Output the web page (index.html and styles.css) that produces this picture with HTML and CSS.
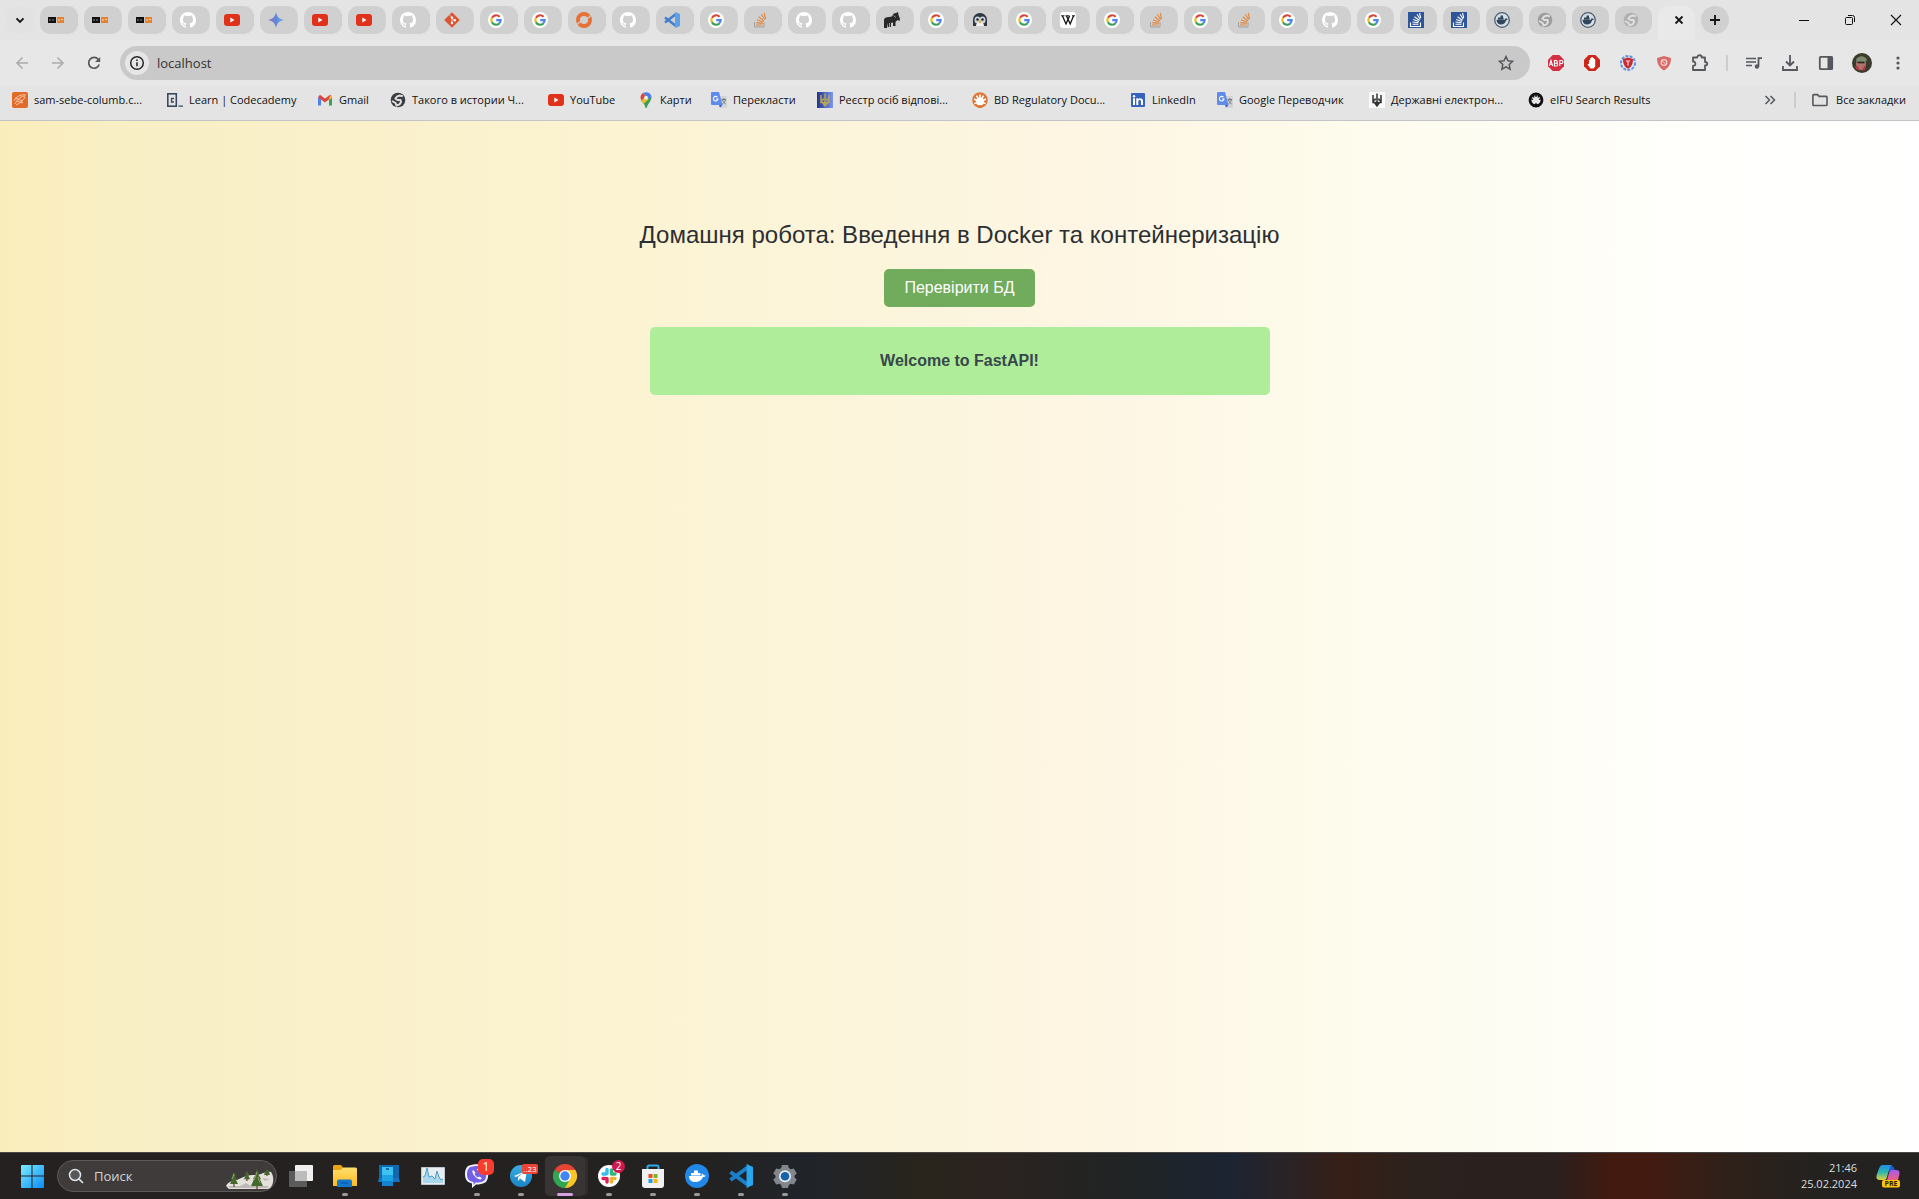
FILE: index.html
```html
<!DOCTYPE html>
<html lang="uk">
<head>
<meta charset="utf-8">
<meta name="viewport" content="width=device-width, initial-scale=1">
<title>localhost</title>
<link rel="stylesheet" href="styles.css">
</head>
<body>
<svg class="sprite" aria-hidden="true">
  <defs>
    <linearGradient id="gem" x1="0" y1="0" x2="1" y2="0"><stop offset="0" stop-color="#a06fc0"/><stop offset=".5" stop-color="#5f86d8"/><stop offset="1" stop-color="#6fb0f0"/></linearGradient>
    <linearGradient id="win" x1="0" y1="0" x2="1" y2="1"><stop offset="0" stop-color="#7cecff"/><stop offset="1" stop-color="#0a8cf8"/></linearGradient>
    <linearGradient id="fold" x1="0" y1="0" x2="0" y2="1"><stop offset="0" stop-color="#ffdf70"/><stop offset="1" stop-color="#ffb91f"/></linearGradient>
    <linearGradient id="tg" x1="0" y1="0" x2="0" y2="1"><stop offset="0" stop-color="#35afe6"/><stop offset="1" stop-color="#1b84c4"/></linearGradient>
    <linearGradient id="reg" x1="0" y1="0" x2="1" y2="0"><stop offset="0" stop-color="#1f348f"/><stop offset="1" stop-color="#7d98ee"/></linearGradient>
    <linearGradient id="cop" x1="0" y1="0" x2="0" y2="1"><stop offset="0" stop-color="#1e8ee8"/><stop offset=".5" stop-color="#2fb8a8"/><stop offset="1" stop-color="#e8d23c"/></linearGradient>
    <linearGradient id="cop2" x1="0" y1="0" x2="0" y2="1"><stop offset="0" stop-color="#a45cf0"/><stop offset="1" stop-color="#f0607c"/></linearGradient>
  </defs>
  <symbol id="danit" viewBox="0 0 16 16"><path fill="#111" d="M0 5h8v6H0z"/><path fill="#e5822e" d="M9 5h7v6H9z"/><path stroke="#888" d="M2 7v2M4 8h2" /><path stroke="#f8d8b8" d="M11 7v2M13 7.500h2"/></symbol>
  <symbol id="github" viewBox="0 0 16 16"><path fill="#fff" d="M8 0C3.580 0 0 3.580 0 8c0 3.540 2.290 6.530 5.470 7.590.4.070.55-.17.55-.38 0-.19-.01-.82-.01-1.490-2.010.37-2.530-.49-2.690-.94-.09-.23-.48-.94-.82-1.130-.28-.15-.68-.52-.01-.53.63-.01 1.080.58 1.230.82.72 1.210 1.870.87 2.330.66.07-.52.28-.87.51-1.070-1.780-.2-3.640-.89-3.640-3.950 0-.87.31-1.590.82-2.150-.08-.2-.36-1.020.08-2.120 0 0 .67-.21 2.200.82A7.500 7.500 0 0 1 8 3.860c.68 0 1.360.09 2 .27 1.530-1.040 2.200-.82 2.200-.82.44 1.100.16 1.920.08 2.120.51.56.82 1.270.82 2.150 0 3.070-1.870 3.750-3.650 3.950.29.25.54.73.54 1.480 0 1.070-.01 1.930-.01 2.200 0 .21.15.46.55.38A8 8 0 0 0 16 8c0-4.420-3.580-8-8-8z"/></symbol>
  <symbol id="youtube" viewBox="0 0 16 16"><rect y="2" width="16" height="12" rx="3" fill="#e0311a"/><path fill="#fff" d="M6.300 5.500v5l4.200-2.500z"/></symbol>
  <symbol id="gemini" viewBox="0 0 16 16"><path fill="url(#gem)" d="M8 0c.8 4.700 3.300 7.200 8 8-4.700.8-7.200 3.300-8 8-.8-4.700-3.300-7.200-8-8 4.700-.8 7.200-3.300 8-8z"/></symbol>
  <symbol id="git" viewBox="0 0 16 16"><path fill="#dd5431" d="M8 .2 15.800 8 8 15.800.2 8z"/><path d="M5.800 3.200 8 5.400V11M8 6l2.600 2.500" stroke="#f3d8cc" fill="none"/><circle cx="8" cy="5.600" r="1.200" fill="#fff"/><circle cx="8" cy="11" r="1.200" fill="#fff"/><circle cx="10.800" cy="8.300" r="1.200" fill="#fff"/></symbol>
  <symbol id="google" viewBox="0 0 16 16"><circle cx="8" cy="8" r="8" fill="#fff"/><g fill="none" stroke-width="2.200"><path stroke="#d8453a" d="M4 5.700A4.700 4.700 0 0 1 11.600 4.800"/><path stroke="#f0b823" d="M4 5.600a4.800 4.800 0 0 0 0 4.800"/><path stroke="#3b9f57" d="M3.900 10.300a4.700 4.700 0 0 0 7.200 1.300"/><path stroke="#5184ec" d="M11 11.700A4.700 4.700 0 0 0 12.700 8.100H8.200"/></g></symbol>
  <symbol id="railway" viewBox="0 0 16 16"><circle cx="8" cy="8" r="6" fill="none" stroke="#e57137" stroke-width="4"/><path d="M1 12.500 5 9M11 7l4-3.500" stroke="#d0d0d0" stroke-width="1.200"/></symbol>
  <symbol id="vscode" viewBox="0 0 16 16"><path d="M1 5.500 12 14M1 10.500 12 2" stroke="#3f7fd0" stroke-width="2.600"/><path fill="#5ba0e8" d="m11 0 5 2v12l-5 2z"/></symbol>
  <symbol id="so" viewBox="0 0 16 16"><path fill="none" stroke="#a0a0a0" d="M2.500 10v5h9.500v-5"/><path stroke="#e28438" stroke-width="1.100" d="M4 13h6.500M4.200 10.600l6.500.8M5 7.800l6.200 2.300M6.700 4.800l5.200 4M9.200 2.200l3.600 5.300M12.200.800 13.500 7"/></symbol>
  <symbol id="sob" viewBox="0 0 16 16"><path fill="#2d5597" d="M0 0h16v16H0z"/><path fill="none" stroke="#fff" stroke-width="1.100" d="M2.500 10.500v4h10v-4M4.500 12.300h6M4.500 10l6 .8M5.200 7.500l5.600 2M6.500 4.800l5 3.700M9 2.200l3.200 5M11.500 1l1.200 5"/></symbol>
  <symbol id="elephant" viewBox="0 0 16 16"><path fill="#292929" d="M0 8c0-2 2-3 5-3l3-.5C9 2 10 1 12 1l2-1 .5 3 1.500 4-.5 2-2-1-1 1-1 1v4H9v-3.500l-2 .5v4H4v-4l-1 5H0z"/><path stroke="#d0d0d0" stroke-width=".7" d="m10 3.500 1.500 2M5.500 11v4"/></symbol>
  <symbol id="penguin" viewBox="0 0 16 16"><path fill="#303941" d="M8 1c5 0 7 4 7 7v6H1V8c0-3 2-7 7-7z"/><ellipse cx="5.500" cy="8" rx="3" ry="3.500" fill="#c9d6dc"/><ellipse cx="10.500" cy="8" rx="3" ry="3.500" fill="#c9d6dc"/><path fill="#f2f2f2" d="M4 14c0-3 2-4 4-4s4 1 4 4z"/><circle cx="5.500" cy="7.500" r="1.200" fill="#223"/><circle cx="10.500" cy="7.500" r="1.200" fill="#223"/><path fill="#e5ad43" d="m6.300 9 1.700-1.300L9.700 9 8 12z"/></symbol>
  <symbol id="wiki" viewBox="0 0 16 16"><rect width="16" height="16" rx="3" fill="#fff"/><path fill="none" stroke="#111" stroke-width="1.300" d="M2.500 4 6 12l3.500-8M6.500 4l3.700 8L13.500 4"/><path stroke="#111" d="M1 3.800h3.500M5.500 3.800h4M12 3.800h3"/></symbol>
  <symbol id="dockerc" viewBox="0 0 16 16"><circle cx="8" cy="8" r="7.300" fill="#d8dee3" stroke="#4b5f75" stroke-width="1.300"/><path fill="#2f465c" d="M2.500 7.800h8.300l1-1.800 1 .8 1.400.3-2.200 1.500c-.7 2.600-2.300 4-5 4-2.700 0-4.400-1.700-4.500-4.800zM4 5.500h5.500v2H4zM6.500 3.500H9v2H6.500z"/></symbol>
  <symbol id="globe" viewBox="0 0 16 16"><circle cx="8" cy="8" r="7.300" fill="currentColor"/><path fill="none" stroke="#dedede" stroke-width="2" d="M12.800 4.200 9.500 3.500 7 4.500 5.500 6.500l2 1.500h3l.5 2-1.500 2.500-3 1-1-2.500L2 9"/></symbol>
  <symbol id="x" viewBox="0 0 16 16"><path d="m4.500 4.500 7 7m0-7-7 7" stroke="#161616" stroke-width="1.800"/></symbol>
  <symbol id="plus" viewBox="0 0 16 16"><path d="M8 3v10M3 8h10" stroke="#161616" stroke-width="1.900"/></symbol>
  <symbol id="chev" viewBox="0 0 16 16"><path d="M4.500 6.300 8 9.800l3.500-3.500" fill="none" stroke="#161616" stroke-width="1.900"/></symbol>
  <symbol id="min" viewBox="0 0 16 16"><path d="M3 8.500h10" stroke="#111"/></symbol>
  <symbol id="max" viewBox="0 0 16 16"><g fill="none" stroke="#111"><rect x="3.500" y="5.500" width="7" height="7" rx="1"/><path d="M6 3.500h4.500a2 2 0 0 1 2 2V10"/></g></symbol>
  <symbol id="close" viewBox="0 0 16 16"><path d="m3 3 10 10M13 3 3 13" stroke="#111" stroke-width="1.100"/></symbol>
  <symbol id="back" viewBox="0 0 16 16"><path d="M14 8H3M8.500 2.500 3 8l5.500 5.500" fill="none" stroke="#aaacae" stroke-width="1.600"/></symbol>
  <symbol id="fwd" viewBox="0 0 16 16"><path d="M2 8h11M7.500 2.500 13 8l-5.500 5.500" fill="none" stroke="#aaacae" stroke-width="1.600"/></symbol>
  <symbol id="reload" viewBox="0 0 16 16"><path d="M13.200 9.500A5.400 5.400 0 1 1 12.300 4.500" fill="none" stroke="#55585c" stroke-width="1.700"/><path fill="#55585c" d="M14.200 2v5H9z"/></symbol>
  <symbol id="info" viewBox="0 0 16 16"><circle cx="8" cy="8" r="6.300" fill="none" stroke="#26282b" stroke-width="1.500"/><path d="M8 7.200v4M8 4.400v1.600" stroke="#26282b" stroke-width="1.600"/></symbol>
  <symbol id="star" viewBox="0 0 16 16"><path d="m8 1.500 2 4.300 4.600.5-3.400 3.200.9 4.700L8 11.800l-4.100 2.400.9-4.700L1.400 6.300 6 5.800z" fill="none" stroke="#55585c" stroke-width="1.500"/></symbol>
  <symbol id="abp" viewBox="0 0 16 16"><path fill="#d33043" d="M4.700 0h6.600L16 4.700v6.600L11.300 16H4.700L0 11.300V4.700z"/><path fill="none" stroke="#fff" stroke-width="1.100" d="M1.300 11 3 5.500 4.700 11M2 9.200h2M6.500 5.500V11h1.800a1.300 1.300 0 0 0 0-2.800H6.500h1.500a1.200 1.200 0 0 0 0-2.700zM11.800 11V5.500h1.700a1.500 1.500 0 0 1 0 3h-1.700"/></symbol>
  <symbol id="ublock" viewBox="0 0 16 16"><path fill="#cc2718" d="M4.700 0h6.600L16 4.700v6.600L11.300 16H4.700L0 11.300V4.700z"/><path fill="#fff" d="M5 5h1.200V3h1.200V2h1.400v1H10v1h1.200v7.500L9.500 13.500h-3L3.500 9.500l1-.8.500.5z"/></symbol>
  <symbol id="tshield" viewBox="0 0 16 16"><circle cx="8" cy="8" r="7" fill="none" stroke="#5b94e4" stroke-width="2" stroke-dasharray="3 1.300"/><path fill="#c42c32" d="M8 2.500 13 4c0 5-1.500 8-5 9.800C4.500 12 3 9 3 4z"/><path stroke="#fbd5d0" stroke-width="1.200" d="M5.800 6h4.400M8 6v4.500"/></symbol>
  <symbol id="shield2" viewBox="0 0 16 16"><path fill="#d96a68" d="M8 1 15 3c0 6-2.500 10-7 12.500C3.500 13 1 9 1 3z"/><circle cx="8" cy="7.500" r="2.800" fill="none" stroke="#f5d6d4" stroke-width="1.200"/><path stroke="#f5d6d4" d="m6 5.500 4 4"/></symbol>
  <symbol id="puzzle" viewBox="0 0 18 18"><path d="M2 3.500h4.200c0-3 4.600-3 4.600 0H14V8c3 0 3 3.500 0 3.500V16H2v-4.200c3.200 0 3.200-4.300 0-4.300z" fill="none" stroke="#55585c" stroke-width="1.800" stroke-linejoin="round"/></symbol>
  <symbol id="music" viewBox="0 0 16 16"><path d="M0 3.500h10M0 7h10M0 10.500h6" stroke="#55585c" stroke-width="1.600"/><path d="M12.500 11V3.200H16" fill="none" stroke="#55585c" stroke-width="1.800"/><circle cx="11" cy="11.500" r="2.200" fill="#55585c"/></symbol>
  <symbol id="down" viewBox="0 0 16 16"><path d="M8 0v10M4 6.500l4 4 4-4M1 11v4h14v-4" fill="none" stroke="#55585c" stroke-width="1.800"/></symbol>
  <symbol id="panel" viewBox="0 0 16 16"><rect x="1.800" y="1.800" width="12.400" height="12.400" rx="1" fill="none" stroke="#55585c" stroke-width="1.800"/><path fill="#55585c" d="M9.500 1.500h5v13h-5z"/></symbol>
  <symbol id="avatar" viewBox="0 0 20 20"><circle cx="10" cy="10" r="10" fill="#3c3a2b"/><ellipse cx="9" cy="11" rx="5" ry="6" fill="#b0756a"/><path fill="#7c8b70" d="M4 7c2-5 9-5 11 0l-2 2H5z"/><path fill="#b53a48" d="M3 13h3l2 5-4-2zM12 13l2 0-1 4-3 1z"/><path stroke="#27221c" stroke-width="1.600" d="M5.500 9.500h7"/></symbol>
  <symbol id="dots" viewBox="0 0 16 16"><g fill="#55585c"><circle cx="8" cy="3" r="1.600"/><circle cx="8" cy="8" r="1.600"/><circle cx="8" cy="13" r="1.600"/></g></symbol>
  <symbol id="columb" viewBox="0 0 16 16"><rect width="16" height="16" rx="2" fill="#e36a27"/><path d="M2 9c2-5 8-7 12-6M3 12c3-6 7-8 10-8M4 13c4-2 7-4 9-8M3 6l8 3M5 9l6 2" fill="none" stroke="#f6d3bd" stroke-width=".9"/></symbol>
  <symbol id="codec" viewBox="0 0 16 16"><rect x=".8" y="1.800" width="8.500" height="12.400" fill="none" stroke="#3a4a63" stroke-width="1.600"/><path d="M7 6.500H4.500v3.500H7M11.500 14.200H16" fill="none" stroke="#3a4a63" stroke-width="1.300"/></symbol>
  <symbol id="gmail" viewBox="0 0 16 16"><path fill="#4c82ea" d="M1 5v8.500h3V7z"/><path fill="#36a557" d="M12 7v6.500h3V5z"/><path fill="none" stroke="#dc4639" stroke-width="3" d="m2 4 6 4.500L14 4"/><path fill="#f0b929" d="m12 5 3-2v3l-3 2z"/></symbol>
  <symbol id="maps" viewBox="0 0 16 16"><path fill="#35a052" d="M3 8c1 2.500 4 4 4.500 8h1.200C9.500 12 13.500 9 13.500 5z"/><path fill="#ecbd35" d="M3 8 8 4l3 3-5.500 5z"/><path fill="#d8483a" d="M2.500 6C2.500 3.500 3.500 2 5 1l3 3-4.500 4.500z"/><path fill="#4b80e5" d="M5 1c3.500-2 8-.5 8.600 4l-3.600 2-2-3z"/><circle cx="8" cy="5.700" r="1.900" fill="#eee"/></symbol>
  <symbol id="gtr" viewBox="0 0 16 16"><path fill="#d2d4d8" d="M6 4h9a1 1 0 0 1 1 1v11h-6z"/><path fill="#5f8bec" d="M1 0h7l3.500 13H1a1 1 0 0 1-1-1V1a1 1 0 0 1 1-1z"/><path fill="#3d61c0" d="M8 13h3.500L9 15.800z"/><path d="M6.500 5.200A2.300 2.300 0 1 0 7 7H5" fill="none" stroke="#fff" stroke-width="1.100"/><path d="M10.500 7.500H15M12.800 6v1.500M11.500 8c.5 2 2 3 3.200 4M14.300 8c-.5 2-2 3.500-3 4" fill="none" stroke="#747a80"/></symbol>
  <symbol id="tryzub" viewBox="0 0 16 16"><path fill="none" stroke="currentColor" stroke-width="1.500" d="M8 1.500V15M4 3v7.500h8V3M4 10c0-2 2-1 2.500-3.500M12 10c0-2-2-1-2.500-3.500M5.500 10.500 8 14l2.500-3.500"/></symbol>
  <symbol id="register" viewBox="0 0 16 16"><path fill="url(#reg)" d="M0 0h16v16H0z"/><use href="#tryzub" color="#b8a552"/></symbol>
  <symbol id="state" viewBox="0 0 16 16"><path fill="#fafafa" d="M0 0h16v16H0z"/><use href="#tryzub" color="#333"/></symbol>
  <symbol id="bd" viewBox="0 0 16 16"><circle cx="8" cy="8" r="7.800" fill="#dd7735"/><path stroke="#fff" stroke-width="1.600" d="M8 10V2.500M8 10 4.500 3.700M8 10l3.500-6.300M8 10 2 7M8 10l6-3M8 10 2.500 11.500M8 10l5.500 1.500"/><circle cx="8" cy="9.500" r="4" fill="#fff"/><path fill="#dd7735" d="M6 16c0-4 4-4 4 0z"/></symbol>
  <symbol id="eifu" viewBox="0 0 16 16"><circle cx="8" cy="8" r="6" fill="#e6e6e6" stroke="#111" stroke-width="2.800"/><path stroke="#111" stroke-width="1.300" d="M8 1v4M4.500 2l1.500 3.500M11.500 2 10 5.500M2 6l3 1.500M14 6l-3 1.500"/><path fill="#111" d="M5.800 15c0-5 4.400-5 4.400 0z"/></symbol>
  <symbol id="linkedin" viewBox="0 0 16 16"><rect x="1" y="1" width="14" height="14" rx="1" fill="#3563bd"/><path fill="#fff" d="M3 6.300h2V13H3zM6.300 6.300h1.900v1c1-1.700 4.800-1.800 4.800 1.700v4h-2V9.500c0-2-2.700-2-2.700 0V13h-2z"/><circle cx="4" cy="4.200" r="1.200" fill="#fff"/></symbol>
  <symbol id="more" viewBox="0 0 16 16"><path d="m3.500 4 4 4-4 4M8.500 4l4 4-4 4" fill="none" stroke="#55585c" stroke-width="1.500"/></symbol>
  <symbol id="folder" viewBox="0 0 16 16"><path d="M.9 12.500V3.400a.8.800 0 0 1 .8-.8h3.800L7.200 4.400h7a.8.800 0 0 1 .8.800v7.500a.8.800 0 0 1-.8.800H1.800a.9.900 0 0 1-.9-1z" fill="none" stroke="#55585c" stroke-width="1.600"/></symbol>
  <symbol id="start" viewBox="0 0 24 24"><path fill="url(#win)" d="M1 2a1 1 0 0 1 1-1h9.500v10.500H1zM12.500 1H23a1 1 0 0 1 1 1v9.500H12.500zM1 12.500h10.500V24H2a1 1 0 0 1-1-1zM12.500 12.500H24V23a1 1 0 0 1-1 1H12.500z"/></symbol>
  <symbol id="search" viewBox="0 0 16 16"><circle cx="7" cy="7" r="5.500" fill="#56585a" stroke="#dfe5ea" stroke-width="1.500"/><path d="m11 11 4 4" stroke="#dfe5ea" stroke-width="1.700"/></symbol>
  <symbol id="snow" viewBox="0 0 50 22"><path fill="#e4e1dc" d="M1 18C4 12 10 13 14 11c5-2 8-4 16-4 7 0 10-4 16-3 3 4 3 11 0 15-1 1-2 2-4 2H4z"/><path fill="#bdb9b9" d="M3 18h12l6-3 5 3h18l-2 2H5zM18 11h8l-4 2zM37 10l8 1-5 2z"/><path stroke="#6d4428" stroke-width="1.200" d="M9 15v4M32 17v4M22 10v3M42 6v2"/><g fill="#45692c"><path d="m9 4 2 4-1 0 2 4-1 0 2 4H5l2-4H6l2-4H7zM22 3l2 4-1 0 2 4h-6l2-4h-1zM32 1l2 5-1 0 3 5-1 0 2 5 1 2H26l3-7-1 0 3-5-1 0zM42 1l2 3 1 3h-6l1-3z"/></g><path stroke="#a2b478" stroke-width=".8" d="m9 6-2 5M32 4l-3 8M33 9l2 6"/></symbol>
  <symbol id="taskview" viewBox="0 0 24 24"><rect x="6" y="1" width="18" height="16" rx="1" fill="#f0f0f0"/><path fill="#5b5b5b" d="M0 7h6v10h12v6H1a1 1 0 0 1-1-1z"/><path fill="#bcbcbc" d="M6 7h12v10H6z"/></symbol>
  <symbol id="explorer" viewBox="0 0 24 24"><path fill="#e8a413" d="M0 2.500A1.500 1.500 0 0 1 1.500 1H8l2 2.500V8H0z"/><path fill="url(#fold)" d="M0 6h8l2-2.500h12.500A1.500 1.500 0 0 1 24 5v17H0z"/><path fill="#1278cc" d="M4 23v-5.500A2 2 0 0 1 6 15.500h11a2 2 0 0 1 2 2V23z"/><path stroke="#0c5dab" stroke-width="1.500" d="M8 19h7"/></symbol>
  <symbol id="phone" viewBox="0 0 24 24"><path fill="#1268ac" d="M2 1h20v14H2z"/><path fill="#1673bd" d="M2 14h20l1 4H1z"/><rect x="5" y="3" width="11" height="19" fill="#1ba3e5"/><path fill="#3cc3f4" d="M5 3h11v8H5z"/><path d="M9 5h3" stroke="#0a4f8c" stroke-width="1.500"/><path fill="#1583cf" d="M5 17h11v5H5z"/></symbol>
  <symbol id="monitor" viewBox="0 0 24 24"><path fill="#e7edf0" stroke="#c0c7cc" d="M.5 3.500h23v17H.5z"/><path fill="#a9d8ee" d="M2 19v-6l2-1 2-8 2 9 3-1 3 3 2-8 2 6 2 3 2-1v4z"/><path fill="none" stroke="#4d9ec5" d="m2 13 2-1 2-8 2 9 3-1 3 3 2-8 2 6 2 3 2-1"/></symbol>
  <symbol id="viber" viewBox="0 0 24 24"><path fill="#f4f1ff" d="M3 2c5-2.500 13-2.500 18 0 3 4 3 12 0 16-3 2-7 2.500-10 2.500L7 24v-4.500C1 18 0 14 0 10 0 6 1 4 3 2z"/><path fill="#7360e8" d="M4.500 3.500c4-2 11-2 15 0 2.500 3 2.500 10 0 13-3 2-6 2-9 2L8.500 21v-3C3 17 2 14 2 10c0-3 1-5 2.500-6.500z"/><path d="M8 6c-2 1 1 8 7 9.500 1.500 0 2-1.500 1-2l-2-1-1 1c-2-1-3-2-3.500-4l1-1z" fill="#fff"/><path d="M12 5.500c4 0 5 2 5 5" fill="none" stroke="#fff" stroke-width="1.200"/></symbol>
  <symbol id="telegram" viewBox="0 0 24 24"><circle cx="12" cy="12" r="11" fill="url(#tg)"/><path fill="#fff" d="M5 12 18 6.500 16 18l-5-3.500L9 17v-4l6-4.500-8 4.500z"/></symbol>
  <symbol id="chrome" viewBox="0 0 24 24"><path fill="#e64536" d="M12 12 1.600 6A12 12 0 0 1 22.400 6z"/><path fill="#f9c626" d="M12 12V6h10.400A12 12 0 0 1 12 24z"/><path fill="#32a752" d="m12 12 4 5-4 7A12 12 0 0 1 1.600 6z"/><circle cx="12" cy="12" r="6" fill="#fff"/><circle cx="12" cy="12" r="4.700" fill="#4285f4"/></symbol>
  <symbol id="slack" viewBox="0 0 24 24"><circle cx="12" cy="12" r="11" fill="#fff"/><g stroke-width="3.400" stroke-linecap="round"><path stroke="#36bfee" d="M10 5.500v4M6 10h3"/><path stroke="#2fb67d" d="M14.500 6v4M15 10h3"/><path stroke="#dd1f5c" d="M10 14.500v3.500M6 14.500h2"/><path stroke="#edb22f" d="M14.500 14.500v3.500M15 14.500h3"/></g></symbol>
  <symbol id="store" viewBox="0 0 24 24"><path d="M6.500 6V3a1.500 1.500 0 0 1 1.500-1.500h8A1.500 1.500 0 0 1 17.500 3v3" fill="none" stroke="#2cabe8" stroke-width="2"/><path fill="#f0f1f2" d="M1 5h22v16a3 3 0 0 1-3 3H4a3 3 0 0 1-3-3z"/><path fill="#ef4a25" d="M7.500 10h4v4h-4z"/><path fill="#7bb720" d="M12.500 10h4v4h-4z"/><path fill="#1e9fe8" d="M7.500 15h4v4h-4z"/><path fill="#fbb800" d="M12.500 15h4v4h-4z"/></symbol>
  <symbol id="docker" viewBox="0 0 24 24"><circle cx="12" cy="12" r="12" fill="#2188e8"/><path fill="#fff" d="M4 12h12.500c.2-1.200 0-2 .5-2.500 1 .5 1.500 1 1.700 1.800l2 .2c-.5 1.200-1.500 1.500-2.700 1.500-1.500 3.500-4 5-7.500 5-4 0-6.500-2-6.500-6zM6 9h9.500v2.500H6zM9 6.500h4V9H9z"/></symbol>
  <symbol id="vsblue" viewBox="0 0 24 24"><path d="m1.500 8 17 12.500M1.500 16 18.500 3.500" stroke="#1a80c9" stroke-width="4"/><path fill="#2aa6ef" d="m17.500 0 6.500 3v18l-6.500 3z"/></symbol>
  <symbol id="gear" viewBox="0 0 24 24"><path fill="#81878d" d="m9 1 6 0 .8 3 2 1.200 3-.8 3 5-2.300 2.200v1.800l2.300 2.200-3 5-3-.8-2 1.200L15 24H9l-.8-3-2-1.200-3 .8-3-5 2.300-2.200v-1.800L.2 9.400l3-5 3 .8 2-1.200z"/><circle cx="12" cy="12.300" r="6" fill="#e9eef2"/><circle cx="12" cy="12.300" r="4.300" fill="#1762a8"/></symbol>
  <symbol id="copilot" viewBox="0 0 24 24"><path fill="#2355d8" d="M12 1c5 0 6 2 7 6h-6z"/><path fill="url(#cop)" d="M7 1h9c-2 1-2.500 3-3 5l-2 7c-.6 2-1 3-3 3H4c-4 0-4-3-3-6l2-5.500C4 2 5 1 7 1z"/><path fill="url(#cop2)" d="M16 6h4c4 0 4 3 3 6l-1 4H11l2-7c.6-2 1-3 3-3z"/><rect x="6" y="16" width="18" height="7.500" rx="2" fill="#ffc40c"/></symbol>
</svg>

<header class="browser">
  <div class="tabstrip">
    <button class="tabsearch" aria-label="Поиск вкладок"><svg><use href="#chev"/></svg></button>
    <nav class="tabs" aria-label="Вкладки">
      <button class="tab"><svg><use href="#danit"/></svg></button>
      <button class="tab"><svg><use href="#danit"/></svg></button>
      <button class="tab"><svg><use href="#danit"/></svg></button>
      <button class="tab"><svg><use href="#github"/></svg></button>
      <button class="tab"><svg><use href="#youtube"/></svg></button>
      <button class="tab"><svg><use href="#gemini"/></svg></button>
      <button class="tab"><svg><use href="#youtube"/></svg></button>
      <button class="tab"><svg><use href="#youtube"/></svg></button>
      <button class="tab"><svg><use href="#github"/></svg></button>
      <button class="tab"><svg><use href="#git"/></svg></button>
      <button class="tab"><svg><use href="#google"/></svg></button>
      <button class="tab"><svg><use href="#google"/></svg></button>
      <button class="tab"><svg><use href="#railway"/></svg></button>
      <button class="tab"><svg><use href="#github"/></svg></button>
      <button class="tab"><svg><use href="#vscode"/></svg></button>
      <button class="tab"><svg><use href="#google"/></svg></button>
      <button class="tab"><svg><use href="#so"/></svg></button>
      <button class="tab"><svg><use href="#github"/></svg></button>
      <button class="tab"><svg><use href="#github"/></svg></button>
      <button class="tab"><svg><use href="#elephant"/></svg></button>
      <button class="tab"><svg><use href="#google"/></svg></button>
      <button class="tab"><svg><use href="#penguin"/></svg></button>
      <button class="tab"><svg><use href="#google"/></svg></button>
      <button class="tab"><svg><use href="#wiki"/></svg></button>
      <button class="tab"><svg><use href="#google"/></svg></button>
      <button class="tab"><svg><use href="#so"/></svg></button>
      <button class="tab"><svg><use href="#google"/></svg></button>
      <button class="tab narrow"><svg><use href="#so"/></svg></button>
      <button class="tab narrow"><svg><use href="#google"/></svg></button>
      <button class="tab narrow"><svg><use href="#github"/></svg></button>
      <button class="tab narrow"><svg><use href="#google"/></svg></button>
      <button class="tab narrow"><svg><use href="#sob"/></svg></button>
      <button class="tab narrow"><svg><use href="#sob"/></svg></button>
      <button class="tab narrow"><svg><use href="#dockerc"/></svg></button>
      <button class="tab narrow globe"><svg><use href="#globe"/></svg></button>
      <button class="tab narrow"><svg><use href="#dockerc"/></svg></button>
      <button class="tab narrow globe pale"><svg><use href="#globe"/></svg></button>
      <button class="tab narrow active" aria-label="localhost"><svg><use href="#x"/></svg></button>
    </nav>
    <button class="newtab" aria-label="Новая вкладка"><svg><use href="#plus"/></svg></button>
    <div class="winctl">
      <button aria-label="Свернуть"><svg><use href="#min"/></svg></button>
      <button aria-label="Развернуть"><svg><use href="#max"/></svg></button>
      <button aria-label="Закрыть"><svg><use href="#close"/></svg></button>
    </div>
  </div>

  <div class="toolbar">
    <div class="navctl">
      <button aria-label="Назад"><svg><use href="#back"/></svg></button>
      <button aria-label="Вперёд"><svg><use href="#fwd"/></svg></button>
      <button aria-label="Обновить"><svg><use href="#reload"/></svg></button>
    </div>
    <div class="omnibox">
      <button class="siteinfo" aria-label="Сведения о сайте"><svg><use href="#info"/></svg></button>
      <input type="text" value="localhost" aria-label="Адрес">
      <button class="bare" aria-label="Добавить в закладки"><svg><use href="#star"/></svg></button>
    </div>
    <div class="exts">
      <button aria-label="ABP"><svg><use href="#abp"/></svg></button>
      <button aria-label="AdBlock"><svg><use href="#ublock"/></svg></button>
      <button aria-label="VPN"><svg><use href="#tshield"/></svg></button>
      <button aria-label="Щит"><svg><use href="#shield2"/></svg></button>
      <button aria-label="Расширения"><svg class="i18"><use href="#puzzle"/></svg></button>
      <span class="rule"></span>
      <button aria-label="Медиа"><svg><use href="#music"/></svg></button>
      <button aria-label="Загрузки"><svg><use href="#down"/></svg></button>
      <button aria-label="Боковая панель"><svg><use href="#panel"/></svg></button>
      <button aria-label="Профиль"><svg class="i20"><use href="#avatar"/></svg></button>
      <button aria-label="Меню"><svg><use href="#dots"/></svg></button>
    </div>
  </div>

  <div class="bookmarks">
    <nav class="marks" aria-label="Закладки">
      <a href="#"><svg><use href="#columb"/></svg>sam-sebe-columb.c...</a>
      <a href="#"><svg><use href="#codec"/></svg>Learn | Codecademy</a>
      <a href="#"><svg><use href="#gmail"/></svg>Gmail</a>
      <a href="#" class="dark"><svg><use href="#globe"/></svg>Такого в истории Ч...</a>
      <a href="#"><svg><use href="#youtube"/></svg>YouTube</a>
      <a href="#"><svg><use href="#maps"/></svg>Карти</a>
      <a href="#"><svg><use href="#gtr"/></svg>Перекласти</a>
      <a href="#"><svg><use href="#register"/></svg>Реєстр осіб відпові...</a>
      <a href="#"><svg><use href="#bd"/></svg>BD Regulatory Docu...</a>
      <a href="#"><svg><use href="#linkedin"/></svg>LinkedIn</a>
      <a href="#"><svg><use href="#gtr"/></svg>Google Переводчик</a>
      <a href="#"><svg><use href="#state"/></svg>Державні електрон...</a>
      <a href="#"><svg><use href="#eifu"/></svg>eIFU Search Results</a>
    </nav>
    <div class="allmarks">
      <button class="bare" aria-label="Ещё закладки"><svg><use href="#more"/></svg></button>
      <span class="rule"></span>
      <a href="#"><svg><use href="#folder"/></svg>Все закладки</a>
    </div>
  </div>
</header>

<main class="page">
  <h1>Домашня робота: Введення в Docker та контейнеризацію</h1>
  <button class="check">Перевірити БД</button>
  <p class="result">Welcome to FastAPI!</p>
</main>

<footer class="taskbar">
  <button class="app" aria-label="Пуск"><svg><use href="#start"/></svg></button>
  <label class="find">
    <svg class="lens"><use href="#search"/></svg>
    <input type="text" placeholder="Поиск" aria-label="Поиск">
    <svg class="scene"><use href="#snow"/></svg>
  </label>
  <div class="apps">
    <button class="app" aria-label="Представление задач"><svg><use href="#taskview"/></svg></button>
    <button class="app open" aria-label="Проводник"><svg><use href="#explorer"/></svg></button>
    <button class="app" aria-label="Телефон"><svg><use href="#phone"/></svg></button>
    <button class="app" aria-label="Монитор"><svg><use href="#monitor"/></svg></button>
    <button class="app open" aria-label="Viber"><svg><use href="#viber"/></svg><span class="badge big">1</span></button>
    <button class="app open" aria-label="Telegram"><svg><use href="#telegram"/></svg><span class="badge tg">..23</span></button>
    <button class="app open current" aria-label="Chrome"><svg><use href="#chrome"/></svg></button>
    <button class="app open" aria-label="Slack"><svg><use href="#slack"/></svg><span class="badge slack">2</span></button>
    <button class="app open" aria-label="Store"><svg><use href="#store"/></svg></button>
    <button class="app open" aria-label="Docker"><svg><use href="#docker"/></svg></button>
    <button class="app open" aria-label="VS Code"><svg><use href="#vsblue"/></svg></button>
    <button class="app open" aria-label="Параметры"><svg><use href="#gear"/></svg></button>
  </div>
  <div class="clock"><time>21:46</time><time>25.02.2024</time></div>
  <button class="app copilot" aria-label="Copilot"><svg><use href="#copilot"/></svg><span class="pre">PRE</span></button>
</footer>
</body>
</html>
```
FILE: styles.css
```css
* { box-sizing: border-box; }
body {
  margin: 0;
  min-height: 100vh;
  display: flex;
  flex-direction: column;
  font-family: "Open Sans", "Noto Sans", sans-serif;
  color: #111;
}
button {
  border: 0;
  padding: 0;
  background: none;
  font: inherit;
  color: inherit;
}
a { color: inherit; text-decoration: none; }
svg { width: 16px; height: 16px; display: block; flex: none; }
.sprite { position: absolute; width: 0; height: 0; }

/* browser chrome */
.browser { background: #e4e4e4; border-bottom: 1px solid #c2c4c8; }
.tabstrip { display: flex; align-items: center; height: 40px; padding: 0 0 0 6px; }
.tabsearch {
  width: 28px; height: 28px; margin-right: 6px;
  display: grid; place-items: center;
  border-radius: 10px; background: #e2e2e2;
}
.tabs { display: flex; gap: 6px; height: 28px; }
.tab {
  width: 38px; height: 28px; padding-left: 8px;
  display: flex; align-items: center;
  border-radius: 10px; background: #d0d0d0;
}
.narrow { width: 37px; }
.globe { color: #9c9c9c; }
.globe.pale { color: #b0b0b0; }
.tab.active {
  height: 34px; padding: 0 0 6px 13px;
  border-radius: 10px 10px 0 0; background: #e9e9e9;
}
.newtab {
  width: 28px; height: 28px; margin-left: 6px;
  display: grid; place-items: center;
  border-radius: 50%; background: #d0d0d0;
}
.winctl { display: flex; margin-left: auto; }
.winctl button { width: 46px; height: 40px; display: grid; place-items: center; }

.toolbar { display: flex; align-items: center; height: 46px; background: #e7e7e7; }
.navctl { display: flex; gap: 20px; padding: 0 18px 0 14px; }
.omnibox {
  flex: 1; height: 34px; padding: 0 16px 0 5px;
  display: flex; align-items: center; gap: 8px;
  border-radius: 17px; background: #c9c9c9;
}
.siteinfo {
  width: 24px; height: 24px;
  display: grid; place-items: center;
  border-radius: 50%; background: #e6e6e6;
}
.omnibox input {
  flex: 1; min-width: 0; border: 0; padding: 0; background: none;
  font-family: inherit; font-size: 13px; line-height: 20px; color: #333;
}
.exts { display: flex; align-items: center; padding: 0 3px 0 8px; }
.exts button { width: 36px; height: 36px; display: grid; place-items: center; }
.navctl button, .exts button { flex: none; }
.i18 { width: 18px; height: 18px; }
.i20 { width: 20px; height: 20px; }
.rule { width: 2px; height: 16px; background: #cdcdcd; }
.exts .rule { margin: 0 8px; }

.bookmarks {
  display: flex; align-items: center; justify-content: space-between;
  height: 34px; padding: 0 13px 6px 12px;
  font-size: 11px; line-height: 16px; white-space: nowrap;
}
.marks {
  display: grid;
  grid-template-columns: 155px 150px 73px 158px 90px 73px 106px 155px 158px 87px 152px 159px 130px;
}
.bookmarks a { display: flex; align-items: center; gap: 6px; }
.dark svg { color: #3a3c3f; }
.allmarks { display: flex; align-items: center; gap: 16px; }
.bookmarks .allmarks a { gap: 8px; }

/* page */
.page {
  flex: 1;
  display: flex; flex-direction: column; align-items: center;
  padding: 98px 16px;
  background: linear-gradient(to right, #faedbb, #f9efc5 6%, #fbf3d2 33%, #fcf5dc 46%, #fef6e4 58%, #fdfbec 70%, #fffffc 88%, #fff);
  font-family: "Liberation Sans", Arial, sans-serif;
}
.page h1 { margin: 0 0 18px; font-size: 24px; line-height: 32px; font-weight: 400; color: #2b2f33; }
.check {
  padding: 7px 20px; border-radius: 5px;
  background: #71ab5c; color: #fff; font-size: 16px; line-height: 24px;
}
.result {
  width: 100%; max-width: 620px; margin: 20px 0 0; padding: 22px;
  border-radius: 5px; background: #b0ed9a;
  font-size: 16px; line-height: 24px; font-weight: 700; text-align: center; color: #38474c;
}

/* taskbar */
.taskbar {
  display: flex; align-items: center;
  height: 47px; padding: 0 11px 0 12px;
  border-top: 1px solid #484745;
  background: linear-gradient(to right, #242120, #242220 36%, #20242a 42%, #29241c 48%, #2b2320 52%, #202425 59%, #1c2433 64%, #2a2326 67%, #361f16 70%, #2b221e 74%, #2a201e 81%, #421a10 84%, #421a10 86%, #2f211a 90%, #232220 95%);
  color: #dedede;
}
.app { position: relative; width: 40px; height: 40px; display: grid; place-items: center; border-radius: 5px; }
.app svg { width: 24px; height: 24px; }
.find {
  width: 220px; height: 32px; margin: 0 4px 0 5px; padding: 0 1px 0 10px;
  display: flex; align-items: center; gap: 10px;
  border: 1px solid #5c5a59; border-radius: 16px; background: #3e3b3a;
}
.find input {
  flex: 1; min-width: 0; border: 0; padding: 0; background: none;
  font-family: inherit; font-size: 13px; line-height: 20px; color: #ddd;
}
.find input::placeholder { color: #d4d4d4; opacity: 1; }
.find .scene { width: 50px; height: 22px; margin-top: 6px; }
.apps { display: flex; gap: 4px; }
.open::after {
  content: ""; position: absolute; left: 17px; bottom: 0;
  width: 6px; height: 3px; border-radius: 2px; background: #9c9a99;
}
.current { background: #373433; box-shadow: 4px 0 0 -1px #302d2c; }
.current::after { left: 12px; width: 16px; background: #d7a0e2; }
.badge { position: absolute; right: 3px; text-align: center; color: #fff; }
.badge.big { top: 3px; width: 16px; height: 16px; border-radius: 5px; font-size: 12px; line-height: 16px; background: #fb3c33; }
.badge.tg { top: 8px; width: 16px; height: 10px; border-radius: 2px; font-size: 8px; line-height: 10px; background: #ec4436; }
.badge.slack { top: 4px; right: 4px; width: 13px; height: 13px; border-radius: 50%; font-size: 10px; line-height: 13px; background: #cf1850; }
.clock {
  margin-left: auto; margin-right: 11px;
  display: flex; flex-direction: column; align-items: flex-end;
  font-size: 11px; line-height: 16px;
}
.pre {
  position: absolute; right: 8px; bottom: 8px; width: 18px;
  font-size: 7px; line-height: 8px; font-weight: 700; text-align: center; color: #2b2000;
}
```
